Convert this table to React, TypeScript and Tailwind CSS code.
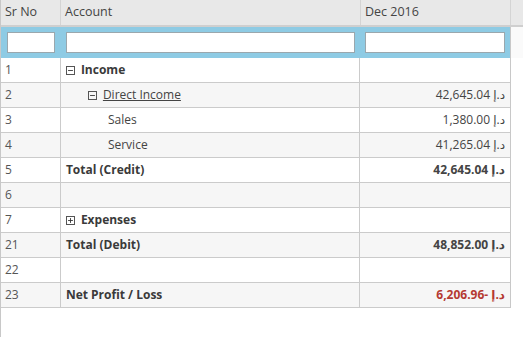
import { Minus, Plus } from 'lucide-react'

type Row = {
  sr: number
  label: string
  level?: number
  toggle?: 'open' | 'closed'
  bold?: boolean
  link?: boolean
  amount?: string
  amountBold?: boolean
  negative?: boolean
}

const rows: Row[] = [
  { sr: 1, label: 'Income', toggle: 'open', bold: true },
  { sr: 2, label: 'Direct Income', level: 1, toggle: 'open', link: true, amount: '42,645.04' },
  { sr: 3, label: 'Sales', level: 2, amount: '1,380.00' },
  { sr: 4, label: 'Service', level: 2, amount: '41,265.04' },
  { sr: 5, label: 'Total (Credit)', bold: true, amount: '42,645.04', amountBold: true },
  { sr: 6, label: '' },
  { sr: 7, label: 'Expenses', toggle: 'closed', bold: true },
  { sr: 21, label: 'Total (Debit)', bold: true, amount: '48,852.00', amountBold: true },
  { sr: 22, label: '' },
  { sr: 23, label: 'Net Profit / Loss', bold: true, amount: '6,206.96-', amountBold: true, negative: true },
]

function TreeToggle({ open }: { open: boolean }) {
  return (
    <span className="inline-flex items-center justify-center w-[9px] h-[9px] border border-[#555] mr-[6px] shrink-0">
      {open ? (
        <Minus className="w-[7px] h-[7px] text-[#333]" strokeWidth={3} />
      ) : (
        <Plus className="w-[7px] h-[7px] text-[#333]" strokeWidth={3} />
      )}
    </span>
  )
}

export default function App() {
  return (
    <div className="w-[523px] h-[337px] overflow-hidden bg-white border-l border-[#c8c8c8] text-[12px] text-[#333] font-['Open_Sans','DejaVu_Sans',sans-serif]">
      {/* header */}
      <div className="flex h-[27px] bg-[#e8e8e8] border-b-2 border-[#cfcfcf] text-[#444] text-[12.5px]">
        <div className="w-[60px] px-[4px] flex items-center border-r border-[#d4d4d4]">Sr No</div>
        <div className="w-[300px] px-[4px] flex items-center border-r border-[#d4d4d4]">Account</div>
        <div className="w-[150px] px-[4px] flex items-center border-r border-[#d4d4d4]">Dec 2016</div>
        <div className="flex-1" />
      </div>

      {/* filter row */}
      <div className="flex h-[31px]">
        <div className="w-[510px] flex bg-[#8ecbe4] border-r border-[#c8c8c8]">
          <div className="w-[60px] px-[6px] flex items-center">
            <input className="w-full h-[21px] bg-white border border-[#9aa7ad] outline-none" />
          </div>
          <div className="w-[300px] px-[5px] flex items-center">
            <input className="w-full h-[21px] bg-white border border-[#9aa7ad] outline-none" />
          </div>
          <div className="w-[150px] px-[5px] flex items-center">
            <input className="w-full h-[21px] bg-white border border-[#9aa7ad] outline-none" />
          </div>
        </div>
        <div className="flex-1 bg-[#fafafa]" />
      </div>

      {/* body */}
      <div className="w-[510px] border-r border-[#c8c8c8]">
        {rows.map((r, i) => (
          <div
            key={r.sr}
            className={`flex h-[25px] border-b border-[#cbcbcb] ${i % 2 === 1 ? 'bg-[#f6f6f6]' : 'bg-white'}`}
          >
            <div className="w-[60px] px-[4px] flex items-center border-r border-[#cbcbcb] text-[#555]">{r.sr}</div>
            <div
              className={`w-[300px] flex items-center border-r border-[#cbcbcb] ${
                r.level === 2 ? 'pl-[47px]' : r.level === 1 ? 'pl-[27px]' : 'pl-[5px]'
              }`}
            >
              {r.toggle && <TreeToggle open={r.toggle === 'open'} />}
              <span className={`${r.bold ? 'font-bold text-[#3a3a3a]' : 'text-[#444]'} ${r.link ? 'underline' : ''}`}>
                {r.label}
              </span>
            </div>
            <div
              className={`w-[150px] flex items-center justify-end pr-[5px] ${
                r.negative ? 'text-[#b53a32]' : 'text-[#444]'
              } ${r.amountBold ? 'font-bold' : ''}`}
            >
              {r.amount && <span>{r.amount} د.إ</span>}
            </div>
          </div>
        ))}
      </div>
    </div>
  )
}
